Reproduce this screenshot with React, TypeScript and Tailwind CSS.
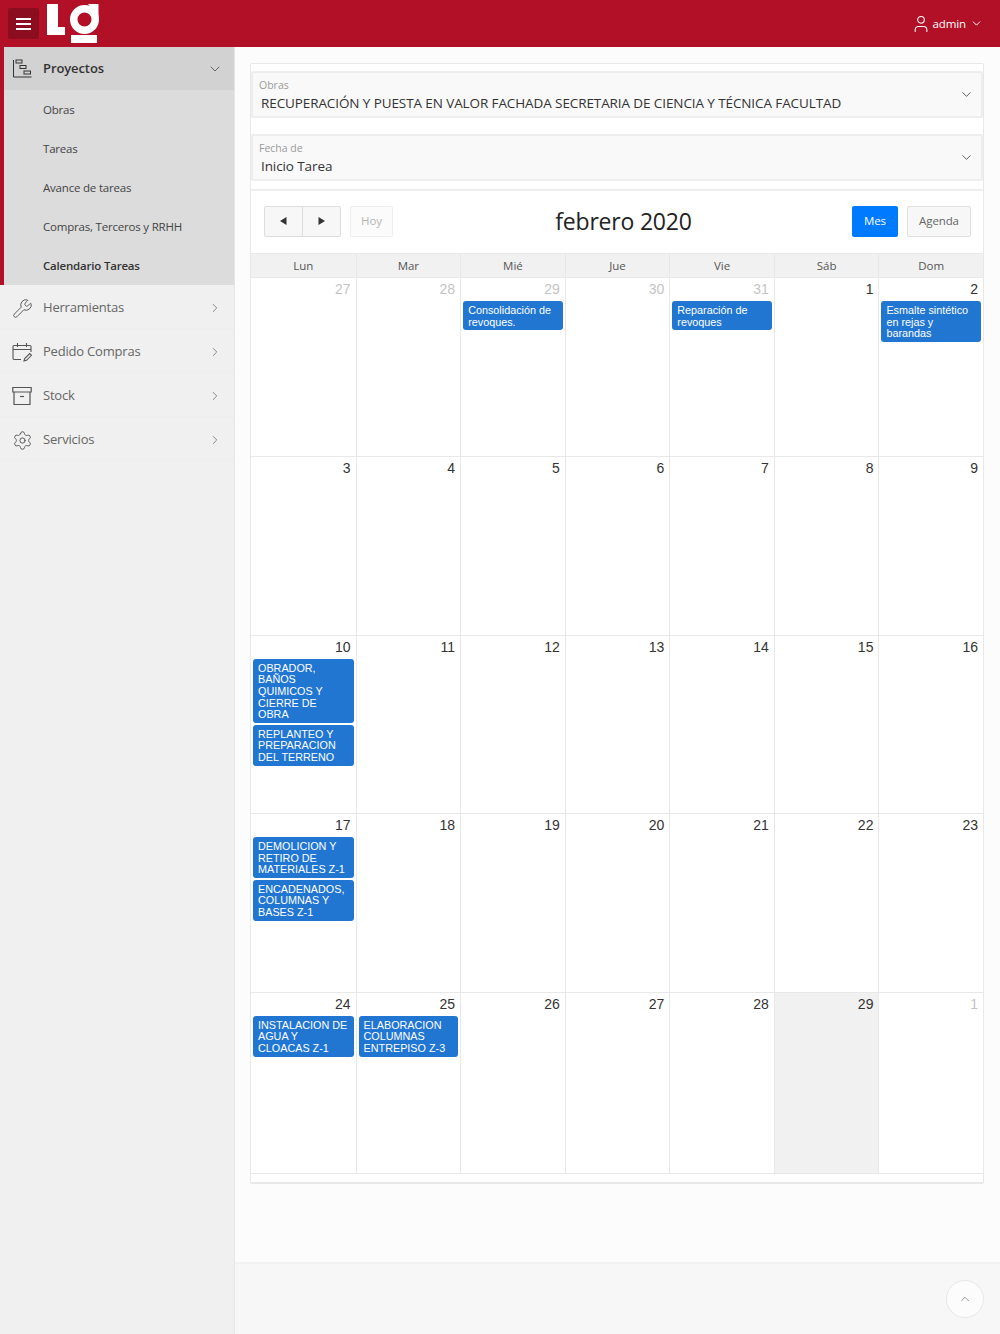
import { ChevronDown, ChevronRight, ChevronUp, Settings, User, Wrench } from "lucide-react"

const FONT = "font-['Open_Sans',sans-serif]"

const subItems = ["Obras", "Tareas", "Avance de tareas", "Compras, Terceros y RRHH", "Calendario Tareas"]
const days = ["Lun", "Mar", "Mié", "Jue", "Vie", "Sáb", "Dom"]

type Cell = { n: number; off?: boolean; today?: boolean; events?: string[] }

const weeks: Cell[][] = [
  [
    { n: 27, off: true },
    { n: 28, off: true },
    { n: 29, off: true, events: ["Consolidación de revoques."] },
    { n: 30, off: true },
    { n: 31, off: true, events: ["Reparación de revoques"] },
    { n: 1 },
    { n: 2, events: ["Esmalte sintético en rejas y barandas"] },
  ],
  [{ n: 3 }, { n: 4 }, { n: 5 }, { n: 6 }, { n: 7 }, { n: 8 }, { n: 9 }],
  [
    { n: 10, events: ["OBRADOR, BAÑOS QUIMICOS Y CIERRE DE OBRA", "REPLANTEO Y PREPARACION DEL TERRENO"] },
    { n: 11 },
    { n: 12 },
    { n: 13 },
    { n: 14 },
    { n: 15 },
    { n: 16 },
  ],
  [
    { n: 17, events: ["DEMOLICION Y RETIRO DE MATERIALES Z-1", "ENCADENADOS, COLUMNAS Y BASES Z-1"] },
    { n: 18 },
    { n: 19 },
    { n: 20 },
    { n: 21 },
    { n: 22 },
    { n: 23 },
  ],
  [
    { n: 24, events: ["INSTALACION DE AGUA Y CLOACAS Z-1"] },
    { n: 25, events: ["ELABORACION COLUMNAS ENTREPISO Z-3"] },
    { n: 26 },
    { n: 27 },
    { n: 28 },
    { n: 29, today: true },
    { n: 1, off: true },
  ],
]

const weekHeights = ["h-[179px]", "h-[178.5px]", "h-[178.5px]", "h-[178.5px]", "h-[181px]"]

function Logo() {
  return (
    <svg width="54" height="40" viewBox="0 0 54 40" className="ml-[8px] mt-[4px] self-start" fill="#fff">
      <path d="M0 0h11v23h7v8H0z" />
      <path fillRule="evenodd" d="M23 15.500a14.500 14.500 0 1 0 29 0 14.500 14.500 0 1 0-29 0zM30.500 15.500a7 7 0 1 1 14 0 7 7 0 1 1-14 0z" />
      <path d="M41 0h10.500v14z" />
      <path d="M24 31h26v8H24z" />
    </svg>
  )
}

function GanttIcon() {
  return (
    <svg width="20" height="20" viewBox="0 0 20 20" fill="none" stroke="#333" strokeWidth="1">
      <path d="M1.500 1v17h18" />
      <rect x="4" y="1" width="6" height="3" />
      <rect x="8" y="6.500" width="6" height="3" />
      <rect x="12" y="12" width="6.500" height="3" />
    </svg>
  )
}

function CalendarEditIcon() {
  return (
    <svg width="20" height="20" viewBox="0 0 20 20" fill="none" stroke="#555" strokeWidth="1.100">
      <path d="M9 17.500H2a1 1 0 0 1-1-1v-12a1 1 0 0 1 1-1h16a1 1 0 0 1 1 1V10" />
      <path d="M1 7.500h18M5.500 1v4M14.500 1v4" />
      <path d="M12 19l.7-2.500 5-5 1.800 1.800-5 5z" />
    </svg>
  )
}

function StockIcon() {
  return (
    <svg width="20" height="20" viewBox="0 0 20 20" fill="none" stroke="#555" strokeWidth="1.200">
      <path d="M.8 1.500h18.400v4.500H.8z" />
      <path d="M2 6v12.500h16V6" />
      <path d="M8 10.500h4" />
    </svg>
  )
}

function SideRow({ label, icon }: { label: string; icon: React.ReactNode }) {
  return (
    <div className="flex h-[44px] items-center border-b border-[#eeeeee] pl-[12px] pr-[12px] pt-[3px]">
      <span className="flex w-[31px] shrink-0 items-center">{icon}</span>
      <span className="flex-1 text-[13px] tracking-[-0.2px] text-[#666666]">{label}</span>
      <ChevronRight className="size-[14px] text-[#777777]" strokeWidth={1.500} />
    </div>
  )
}

function Sidebar() {
  return (
    <aside className="w-[235px] shrink-0 border-r border-[#e6e6e6] bg-[#f0f0f0]">
      <div className="border-l-[4px] border-[#b11027]">
        <div className="flex h-[43px] items-center bg-[#d2d2d2] pl-[8px] pr-[11px] pt-[1px]">
          <span className="flex w-[31px] shrink-0 items-center">
            <GanttIcon />
          </span>
          <span className="flex-1 text-[13px] font-semibold tracking-[-0.1px] text-[#333333]">Proyectos</span>
          <ChevronDown className="size-[16px] text-[#666666]" strokeWidth={1.500} />
        </div>
        <div className="bg-[#dcdcdc]">
          {subItems.map((item, i) => (
            <div
              key={item}
              className={`flex h-[39px] items-center pl-[39px] pt-[1px] text-[11.500px] tracking-[-0.2px] ${
                i === subItems.length - 1 ? "font-semibold text-[#333333]" : "text-[#444444]"
              }`}
            >
              {item}
            </div>
          ))}
        </div>
      </div>
      <SideRow label="Herramientas" icon={<Wrench className="size-[21px] text-[#555555]" strokeWidth={1.100} />} />
      <SideRow label="Pedido Compras" icon={<CalendarEditIcon />} />
      <SideRow label="Stock" icon={<StockIcon />} />
      <SideRow label="Servicios" icon={<Settings className="size-[21px] text-[#555555]" strokeWidth={1.100} />} />
    </aside>
  )
}

function SelectBox({ label, value }: { label: string; value: string }) {
  return (
    <div className="flex h-[47px] items-center rounded-[2px] border-2 border-[#eeeeee] bg-[#f9f9f9] pr-[7px]">
      <div className="min-w-0 flex-1 pl-[6px] pt-[1px]">
        <div className="text-[10.500px] leading-[14px] text-[#9a9a9a]">{label}</div>
        <div className="pl-[2px] pt-[1px] text-[13.500px] leading-[20px] tracking-[-0.1px] text-[#333333]">{value}</div>
      </div>
      <ChevronDown className="size-[15px] text-[#555555]" strokeWidth={1.500} />
    </div>
  )
}

function DayCell({ cell }: { cell: Cell }) {
  return (
    <div className={`border-l-[1.500px] border-[#e8e8e8] px-[2px] first:border-l-0 ${cell.today ? "bg-[#f1f1f1]" : "bg-white"}`}>
      <div
        className={`pr-[3px] pt-[1px] text-right font-['Liberation_Sans',sans-serif] text-[14px] leading-[20px] ${
          cell.off ? "text-[#c4c4c4]" : "text-[#333333]"
        }`}
      >
        {cell.n}
      </div>
      <div className="mt-[2px] flex flex-col gap-[1.500px]">
        {cell.events?.map((ev) => (
          <div
            key={ev}
            className="rounded-[3px] bg-[#2176d2] px-[5px] pb-[2px] pt-[4px] font-['Liberation_Sans',sans-serif] text-[10.800px] leading-[11.700px] text-white"
          >
            {ev}
          </div>
        ))}
      </div>
    </div>
  )
}

function Calendar() {
  return (
    <div className="mt-[8px] border-t-2 border-[#eeeeee] bg-white">
      <div className="flex h-[62px] items-center pb-[2px] pl-[13px] pr-[12px]">
        <div className="flex h-[31px] w-[77px] overflow-hidden rounded-[2px] border border-[#dddddd] bg-[#f7f7f7]">
          <div className="flex flex-1 items-center justify-center border-r border-[#dddddd]">
            <svg width="7" height="8" viewBox="0 0 7 8" fill="#333">
              <path d="M6.500 0v8L0 4z" />
            </svg>
          </div>
          <div className="flex flex-1 items-center justify-center">
            <svg width="7" height="8" viewBox="0 0 7 8" fill="#333">
              <path d="M.5 0v8L7 4z" />
            </svg>
          </div>
        </div>
        <div className="ml-[9px] flex h-[31px] w-[43px] items-center justify-center rounded-[2px] border border-[#eeeeee] bg-[#fbfbfb] text-[11.500px] tracking-[-0.1px] text-[#b5b5b5]">
          Hoy
        </div>
        <div className="flex-1 pl-[2px] text-center text-[23px] leading-[32px] tracking-[-0.2px] text-[#222222]">febrero 2020</div>
        <div className="flex h-[31px] w-[46px] items-center justify-center rounded-[2px] bg-[#007bff] text-[11.500px] tracking-[-0.1px] text-white">Mes</div>
        <div className="ml-[9px] flex h-[31px] w-[64px] items-center justify-center rounded-[2px] border border-[#e0e0e0] bg-[#f7f7f7] text-[11.500px] tracking-[-0.1px] text-[#666666]">
          Agenda
        </div>
      </div>
      <div className="grid h-[25px] grid-cols-7 border-y border-[#e8e8e8] bg-[#f1f1f1]">
        {days.map((d) => (
          <div key={d} className="flex items-center justify-center border-l-[1.500px] border-[#e8e8e8] text-[11.500px] text-[#555555] first:border-l-0">
            {d}
          </div>
        ))}
      </div>
      {weeks.map((week, i) => (
        <div key={i} className={`grid grid-cols-7 border-b-[1.500px] border-[#e8e8e8] ${weekHeights[i]}`}>
          {week.map((cell, j) => (
            <DayCell key={j} cell={cell} />
          ))}
        </div>
      ))}
    </div>
  )
}

export default function App() {
  return (
    <div className={`flex min-h-[1334px] flex-col bg-[#fcfcfc] ${FONT}`}>
      <header className="flex h-[47px] shrink-0 items-center bg-[#b11027] pl-[8px] pr-[17px] text-white">
        <div className="mt-[8px] flex size-[31px] flex-col items-center justify-center gap-[3px] self-start rounded-[2px] bg-[#8c0d1f]">
          <span className="h-[2px] w-[15px] bg-white" />
          <span className="h-[2px] w-[15px] bg-white" />
          <span className="h-[2px] w-[15px] bg-white" />
        </div>
        <Logo />
        <div className="ml-auto flex items-center gap-[4px] text-[11.500px] tracking-[-0.1px]">
          <User className="-mr-[3px] size-[20px]" strokeWidth={1.300} />
          <span>admin</span>
          <ChevronDown className="size-[13px]" strokeWidth={1.800} />
        </div>
      </header>
      <div className="flex flex-1">
        <Sidebar />
        <main className="flex min-w-0 flex-1 flex-col">
          <div className="flex-1 px-[15px] pt-[16px]">
            <div className="w-[734px] rounded-[2px] border border-b-2 border-[#e8e8e8] bg-white pb-[8px] pt-[7px]">
              <SelectBox label="Obras" value="RECUPERACIÓN Y PUESTA EN VALOR FACHADA SECRETARIA DE CIENCIA Y TÉCNICA FACULTAD" />
              <div className="mt-[16px]">
                <SelectBox label="Fecha de" value="Inicio Tarea" />
              </div>
              <Calendar />
            </div>
          </div>
          <footer className="flex h-[72px] shrink-0 items-start justify-end border-t-2 border-[#f2f2f2] bg-[#f7f7f7] pr-[16px] pt-[16px]">
            <div className="flex size-[38px] items-center justify-center rounded-full border border-[#e8e8e8] bg-[#fcfcfc]">
              <ChevronUp className="size-[14px] text-[#888888]" strokeWidth={1.500} />
            </div>
          </footer>
        </main>
      </div>
    </div>
  )
}
